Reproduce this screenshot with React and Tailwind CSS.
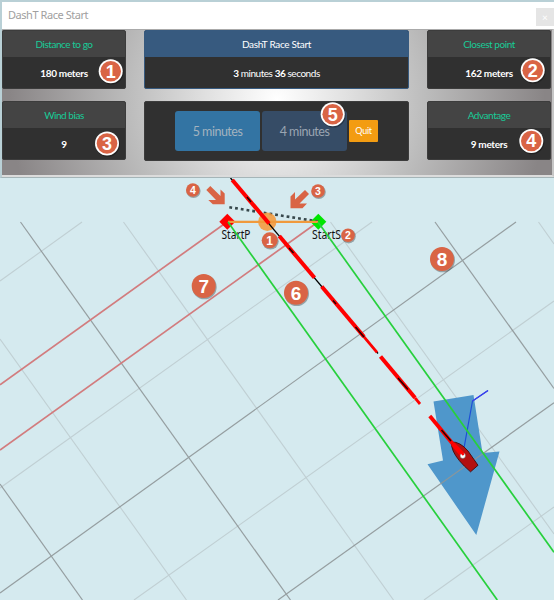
const DARK = [
  [20.5, 222, 290.5, 600],
  [0, 484, 82.5, 600],
  [435, 222, 554, 388.5],
  [516, 222, 0, 593],
  [554, 402.7, 278, 600],
];

const LIGHT = [
  [123.5, 222, 393.5, 600],
  [0, 339, 186.5, 600],
  [330.5, 222, 554, 534],
  [538.5, 222, 554, 244],
  [82, 222, 0, 281],
  [372, 222, 0, 488],
  [554, 301, 134, 600],
  [554, 507, 424, 600],
];

function Line({ p, ...rest }) {
  return <line x1={p[0]} y1={p[1]} x2={p[2]} y2={p[3]} {...rest} />;
}

function Badge({ x, y, r, n, size, ring }) {
  return (
    <g>
      <circle cx={x + 0.7} cy={y + 1} r={r + 0.3} fill="#000" opacity="0.3" />
      <circle cx={x} cy={y} r={r} fill={ring ? "#fff" : "#d96445"} />
      {ring && <circle cx={x} cy={y} r={r - 1.7} fill="#d96445" />}
      <text
        x={x}
        y={y + size * 0.36}
        fontSize={size}
        textAnchor="middle"
        fill="#fff"
        fontWeight="700"
        fontFamily='"Liberation Sans", Arial, sans-serif'
      >
        {n}
      </text>
    </g>
  );
}

function Chart() {
  return (
    <svg className="absolute inset-0" width="554" height="600" viewBox="0 0 554 600">
      <g stroke="#c0cfd3" strokeWidth="1.1">
        {LIGHT.map((p, i) => <Line key={i} p={p} />)}
      </g>
      <path d="M433.5 401.5 L473.5 395 L482.5 453 L499.5 451.5 L476.3 535 L427.5 464.3 L443 460.5 Z" fill="#4f97cb" />
      <g stroke="#8f9698" strokeWidth="1.2" opacity="0.9">
        {DARK.map((p, i) => <Line key={i} p={p} />)}
      </g>
      <path d="M464 448 L472.5 401 L488 390.5" fill="none" stroke="#1d4fd6" strokeWidth="1.2" />
      <path d="M472.5 401 L488 390.5" stroke="#3d3df0" strokeWidth="1.2" />

      <g stroke="#d27c7e" strokeWidth="1.7">
        <Line p={[227, 222, 0, 384.7]} />
        <Line p={[318, 222, 0, 450]} />
      </g>

      <path d="M227.3 213.8 L235.3 221.8 L227.3 229.8 L219.3 221.8 Z" fill="#f00" />
      <path d="M318.3 213.8 L326.3 221.8 L318.3 229.8 L310.3 221.8 Z" fill="#00e600" />
      <line x1="318" y1="221.5" x2="228" y2="207" stroke="#37474b" strokeWidth="2.6" strokeDasharray="2.8 3" />
      <circle cx="267.3" cy="221.8" r="9.2" fill="#f59a3c" opacity="0.88" />
      <line x1="228" y1="221.8" x2="318" y2="221.8" stroke="#f09a3c" strokeWidth="2.2" />

      <g fill="#111" fontSize="11.8" fontFamily='"Noto Sans", sans-serif'>
        <text x="221.5" y="239" textLength="29" lengthAdjust="spacingAndGlyphs">StartP</text>
        <text x="312" y="239" textLength="29" lengthAdjust="spacingAndGlyphs">StartS</text>
      </g>

      <g stroke="#27d03c" strokeWidth="1.7">
        <Line p={[228, 222, 497.3, 600]} />
        <Line p={[318, 222, 554, 552.3]} />
      </g>

      <Line p={[230.5, 178, 378, 353.5]} stroke="#000" strokeWidth="1.3" />
      <g stroke="#f00" strokeWidth="4">
        <Line p={[232.3, 180, 269, 223.5]} />
        <Line p={[279.3, 236, 314.5, 277.8]} />
        <Line p={[321.7, 286.5, 364, 336.8]} />
        <Line p={[380.5, 356.5, 415, 397.8]} />
      </g>
      <g stroke="#f00" strokeWidth="2.8">
        <Line p={[364, 336.8, 377, 352.3]} />
        <Line p={[415, 397.8, 420, 404]} />
      </g>
      <g stroke="#200" strokeWidth="1.4">
        <Line p={[247, 197, 251, 202]} />
        <Line p={[289, 248, 293.5, 253]} />
        <Line p={[333, 300.5, 336, 304]} />
        <Line p={[355.5, 327, 364, 337]} />
        <Line p={[398, 378, 408, 389.5]} />
      </g>

      <path d="M451.5 442 Q460 441.5 468 451 L478 465.3 L470.5 471.8 Q457 460 453.2 451 Q451 446 451.5 442 Z" fill="#b31010" stroke="#4c1010" strokeWidth="1" />
      <path d="M429.8 416 L452.5 443.5" stroke="#f00" strokeWidth="3.8" />
      <path d="M451 445 L454 442 L465 453.5 L461 457 Z" fill="#f00" />
      <Line p={[441.5, 430, 451, 441]} stroke="#200" strokeWidth="1.5" />
      <circle cx="462.8" cy="455.8" r="2.7" fill="#fff" stroke="#555" strokeWidth="0.5" />
      <path d="M460.5 453 L463.5 452.2 L464.2 455 L462.3 455.6 Z" fill="#f00" />

      <g fill="#d96445">
        <path d="M206.3 190 L210.3 186 L220.5 196 L220.5 189.5 L224.7 193.5 L224.7 204.3 L212.8 204.3 L208.3 200 L216 200 Z" />
        <path d="M305 190 L309 194 L299.5 203.5 L307 203.5 L302.5 208.3 L290.5 208.3 L290.5 196.5 L295 192 L295 199.5 Z" />
      </g>

      <Badge x={192.8} y={190} r={6.8} n="4" size={10.5} />
      <Badge x={318} y={191} r={6.8} n="3" size={10.5} />
      <Badge x={269.7} y={240.3} r={8} n="1" size={12} />
      <Badge x={348} y={235.3} r={6.8} n="2" size={10.5} />
      <Badge x={203.7} y={286} r={12} n="7" size={19} />
      <Badge x={296} y={292.7} r={12} n="6" size={19} />
      <Badge x={442} y={259} r={12} n="8" size={19} />
    </svg>
  );
}

function Card({ title, value, blue }) {
  return (
    <div className={`flex h-[59px] flex-col overflow-hidden rounded-[2px] border text-center ${blue ? "border-[#375a7f]" : "border-[#3c3c3c]"} bg-[#303030]`}>
      <div className={`h-[26px] text-[10px] leading-[26px] ${blue ? "bg-[#375a7f] tracking-[-0.3px] text-white" : "bg-[#444] tracking-[-0.45px] text-[#18cc98]"}`}>{title}</div>
      <div className={`h-[32px] text-[10px] leading-[32px] text-white ${blue ? "tracking-[-0.45px]" : "tracking-[-0.3px]"}`}>{value}</div>
    </div>
  );
}

export default function App() {
  return (
    <div className="relative h-[600px] w-[554px] overflow-hidden bg-[#d5eaef] font-[Lato,sans-serif]">
      <Chart />
      <div className="relative flex h-[178px] flex-col border-t-2 border-b border-l-2 border-t-[#b9d0d6] border-b-[#a5b5b8] border-l-[#b9d0d6]">
        <div className="flex h-[27px] shrink-0 items-center justify-between bg-white pl-[6px]">
          <span className="font-['Noto_Sans',sans-serif] text-[11px] tracking-[-0.45px] text-[#a0a0a0]">DashT Race Start</span>
          <span className="mt-[3px] flex h-[18px] w-[18px] items-center justify-center bg-[#e5e5e5] text-[10px] text-white">×</span>
        </div>
        <div className="grid flex-1 grid-cols-[124px_265px_124px] content-start gap-x-[18px] gap-y-[12px] border-t border-r-2 border-b-2 border-t-[#aaa] border-r-[#c6c6c6] border-b-[#dcdcdc] bg-[radial-gradient(circle_at_50%_48%,#fff_0%,#e0e0e0_25%,#bcbcbc_52%,#898586_94%)]">
          <Card title="Distance to go" value={<b>180 meters</b>} />
          <Card blue title="DashT Race Start" value={<><b>3</b> minutes <b>36</b> seconds</>} />
          <Card title="Closest point" value={<b>162 meters</b>} />
          <Card title="Wind bias" value={<b>9</b>} />
          <div className="flex h-[60px] items-center justify-center gap-[2px] rounded-[2px] border border-[#3c3c3c] bg-[#303030]">
            <button className="h-[40px] w-[85px] rounded-[3px] bg-[#3374a3] pt-[2px] text-[12.5px] tracking-[-0.5px] text-[#a3b3bf]">5 minutes</button>
            <button className="h-[40px] w-[85px] rounded-[3px] bg-[#364c66] pt-[2px] text-[12.5px] tracking-[-0.5px] text-[#9ba5b2]">4 minutes</button>
            <button className="h-[22px] w-[29px] rounded-[1px] bg-[#f39c12] text-[9px] tracking-[-0.3px] text-white">Quit</button>
          </div>
          <Card title="Advantage" value={<b>9 meters</b>} />
        </div>
      </div>
      <svg className="absolute top-0 left-0" width="554" height="178" viewBox="0 0 554 178">
        <Badge ring x={110.7} y={71.3} r={12} n="1" size={18} />
        <Badge ring x={532.7} y={70.3} r={12} n="2" size={18} />
        <Badge ring x={107} y={143.5} r={12} n="3" size={18} />
        <Badge ring x={531.3} y={141} r={12} n="4" size={18} />
        <Badge ring x={332.7} y={114.3} r={12} n="5" size={18} />
      </svg>
    </div>
  );
}
